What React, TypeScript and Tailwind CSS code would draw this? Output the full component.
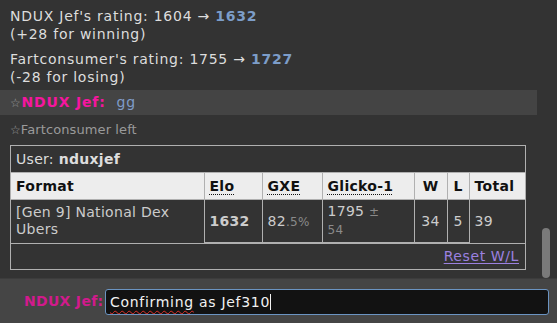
import React from 'react';

const font = { fontFamily: '"DejaVu Sans", Verdana, sans-serif' };

const Abbr = ({ children }: { children: React.ReactNode }) => (
  <span className="underline decoration-dotted decoration-1 underline-offset-[3px]">{children}</span>
);

const RatingLine = ({ name, from, to, diff, last }: { name: string; from: number; to: number; diff: string; last?: boolean }) => (
  <div className={'px-[10px] leading-[18px] text-[14px] tracking-[0.75px] text-[#dddddd] ' + (last ? 'mb-[4px]' : 'mb-[7px]')}>
    <div>
      {name}'s rating: {from} → <strong className="text-[#7c9dc9]">{to}</strong>
    </div>
    <div>{diff}</div>
  </div>
);

export default function App() {
  return (
    <div className="w-[557px] h-[323px] bg-[#333333] flex flex-col overflow-hidden" style={font}>
      <div className="flex h-[278px]">
        <div className="w-[537px] pt-[7px]">
          <RatingLine name="NDUX Jef" from={1604} to={1632} diff="(+28 for winning)" />
          <RatingLine name="Fartconsumer" from={1755} to={1727} diff="(-28 for losing)" last />
          <div className="bg-[#444444] h-[25px] px-[10px] flex items-center text-[14px] tracking-[0.8px]">
            <span className="text-[#9a9a9a] text-[12px]">☆</span>
            <strong className="text-[#f5169f] mr-[11px]">NDUX Jef:</strong>
            <span className="text-[#7f9cc8]">gg</span>
          </div>
          <div className="px-[10px] h-[30px] flex items-center text-[13px] tracking-[0.1px] text-[#9a9a9a]">
            <span className="text-[12px]">☆</span>Fartconsumer left
          </div>
          <div className="ml-[10px] w-[516px] border border-[#b0b0b0] text-[14px] tracking-[0.3px] text-[#dddddd]">
            <div className="h-[26px] px-[5px] flex items-center">
              User:&nbsp;<strong>nduxjef</strong>
            </div>
            <table className="w-full border-collapse table-fixed">
              <thead>
                <tr className="bg-[#ededed] text-[#111111] h-[27px] font-bold">
                  <th className="w-[193px] border-t border-r border-[#b0b0b0] text-left px-[5px] font-bold">Format</th>
                  <th className="w-[58px] border border-[#b0b0b0] text-left px-[5px]"><Abbr>Elo</Abbr></th>
                  <th className="w-[60px] border border-[#b0b0b0] text-left px-[5px]"><Abbr>GXE</Abbr></th>
                  <th className="w-[92px] border border-[#b0b0b0] text-left px-[5px]"><Abbr>Glicko-1</Abbr></th>
                  <th className="w-[33px] border border-[#b0b0b0] text-center">W</th>
                  <th className="w-[22px] border border-[#b0b0b0] text-center">L</th>
                  <th className="border-t border-l border-[#b0b0b0] text-left px-[5px]">Total</th>
                </tr>
              </thead>
              <tbody>
                <tr className="h-[43px] text-[#cccccc]">
                  <td className="border-t border-r border-[#b0b0b0] px-[5px] leading-[17px]">[Gen 9] National Dex Ubers</td>
                  <td className="border border-[#b0b0b0] px-[5px] font-bold">1632</td>
                  <td className="border border-[#b0b0b0] px-[5px]">
                    82<span className="text-[12px] text-[#8a8a8a]">.5%</span>
                  </td>
                  <td className="border border-[#b0b0b0] px-[5px] leading-[17px]">
                    1795 <span className="text-[12px] text-[#8a8a8a]">±<br />54</span>
                  </td>
                  <td className="border border-[#b0b0b0] text-center">34</td>
                  <td className="border border-[#b0b0b0] text-center">5</td>
                  <td className="border-t border-l border-[#b0b0b0] px-[5px]">39</td>
                </tr>
              </tbody>
            </table>
            <div className="h-[26px] border-t border-[#b0b0b0] flex items-center justify-end pr-[6px]">
              <a href="#" className="text-[#9c81e0] underline underline-offset-[2px] tracking-[0.6px]">Reset W/L</a>
            </div>
          </div>
        </div>
        <div className="flex-1 pt-[228px] pl-[5px]">
          <div className="w-[8px] h-[50px] rounded-full bg-[#7a7a7a]" />
        </div>
      </div>
      <div className="flex-1 bg-[#454545] border-t border-[#3c3c3c] flex items-center pl-[24px] pr-[8px]">
        <strong className="text-[#d11a8c] text-[14px] tracking-[0.3px] w-[81px]">NDUX Jef:</strong>
        <div className="flex-1 h-[26px] mt-[2px] bg-[#121212] border border-[#6b94c2] rounded-[3px] flex items-center pl-[4px] text-[14px] tracking-[0.7px] text-[#f2f2f2]">
          <span className="underline decoration-wavy decoration-[#e0302a] decoration-1 underline-offset-[3px]">Confirming</span>
          <span>&nbsp;as Jef310</span>
          <span className="w-px h-[16px] bg-[#f2f2f2]" />
        </div>
      </div>
    </div>
  );
}
